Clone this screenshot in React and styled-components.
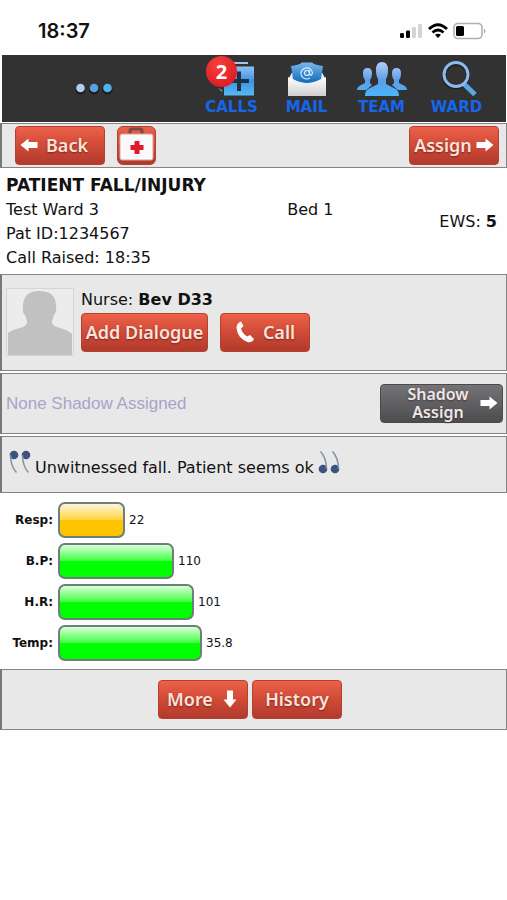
import React from "react";
import styled, { createGlobalStyle } from "styled-components";

const vitals = [
  { label: "Resp:", value: "22", width: 67, color: "#ffc400" },
  { label: "B.P:", value: "110", width: 116, color: "#00ff00" },
  { label: "H.R:", value: "101", width: 136, color: "#00ff00" },
  { label: "Temp:", value: "35.8", width: 144, color: "#00ff00" },
];

function App() {
  return (
    <Page>
      <GlobalStyle />
      <StatusBar>
        <Clock>18:37</Clock>
        <StatusIcons />
      </StatusBar>

      <Nav>
        <MenuLink href="#menu" aria-label="Menu">
          <DotsIcon />
        </MenuLink>
        <NavLink href="#calls">
          <CallsIcon />
          CALLS
          <Badge>2</Badge>
        </NavLink>
        <NavLink href="#mail">
          <MailIcon />
          MAIL
        </NavLink>
        <NavLink href="#team">
          <TeamIcon />
          TEAM
        </NavLink>
        <NavLink href="#ward">
          <WardIcon />
          WARD
        </NavLink>
      </Nav>

      <Toolbar>
        <BackButton>
          <Arrow turn={180} />
          Back
        </BackButton>
        <KitButton aria-label="First aid">
          <KitIcon />
        </KitButton>
        <Spacer />
        <Button $gap={4}>
          Assign
          <Arrow />
        </Button>
      </Toolbar>

      <Info>
        <Details>
          <Title>PATIENT FALL/INJURY</Title>
          <Line>Test Ward 3</Line>
          <Line>Pat ID:1234567</Line>
          <Line>Call Raised: 18:35</Line>
        </Details>
        <Bed>Bed 1</Bed>
        <Ews>
          EWS: <b>5</b>
        </Ews>
      </Info>

      <Panels>
        <NursePanel>
          <Avatar />
          <div>
            <Line>
              Nurse: <b>Bev D33</b>
            </Line>
            <Actions>
              <Button $width={127}>Add Dialogue</Button>
              <Button>
                <PhoneIcon />
                Call
              </Button>
            </Actions>
          </div>
        </NursePanel>

        <ShadowPanel>
          <Muted>None Shadow Assigned</Muted>
          <ShadowButton>
            <ShadowText>Shadow Assign</ShadowText>
            <Arrow />
          </ShadowButton>
        </ShadowPanel>

        <QuotePanel>
          <QuoteMark />
          <Quote>Unwitnessed fall. Patient seems ok</Quote>
          <QuoteMark close />
        </QuotePanel>
      </Panels>

      <Chart>
        {vitals.map((v) => (
          <Vital key={v.label}>
            <VitalLabel>{v.label}</VitalLabel>
            <Bar $color={v.color} style={{ width: v.width }} />
            <VitalValue>{v.value}</VitalValue>
          </Vital>
        ))}
      </Chart>

      <Footer>
        <Button>
          More
          <Arrow turn={90} />
        </Button>
        <Button>History</Button>
      </Footer>
    </Page>
  );
}

export default App;

function StatusIcons() {
  return (
    <svg width="88" height="18" viewBox="0 0 88 18">
      <rect x="1" y="11" width="4" height="5" rx="1.3" fill="#000" />
      <rect x="7" y="8.5" width="4" height="7.5" rx="1.3" fill="#000" />
      <rect x="13" y="5" width="4" height="11" rx="1.3" fill="#d4d4d4" />
      <rect x="19" y="2" width="4" height="14" rx="1.3" fill="#d4d4d4" />
      <g fill="none" stroke="#000" strokeWidth="2.8">
        <path d="M30 7 Q39 -1.5 48 7" />
        <path d="M33.5 10.5 Q39 5.5 44.5 10.5" />
      </g>
      <path d="M36 12.8 Q39 10.5 42 12.8 L39 16 Z" fill="#000" />
      <rect x="55" y="1.5" width="28" height="15" rx="4" fill="#fff" stroke="#b0b0b0" strokeWidth="1.6" />
      <rect x="57" y="4" width="8" height="10" rx="1.5" fill="#000" />
      <path d="M85 6.5 Q88 9 85 11.5 Z" fill="#a8a8a8" />
    </svg>
  );
}

function DotsIcon() {
  return (
    <svg width="38" height="14" viewBox="0 0 38 14">
      <g fill="#1b1b1b">
        <circle cx="5.5" cy="7.5" r="5" />
        <circle cx="19" cy="7.5" r="5" />
        <circle cx="32.5" cy="7.5" r="5" />
      </g>
      <circle cx="5.5" cy="6" r="4.3" fill="#b3cdf2" />
      <circle cx="19" cy="6" r="4.3" fill="#5b9fdf" />
      <circle cx="32.5" cy="6" r="4.3" fill="#52b3ea" />
    </svg>
  );
}

function CallsIcon() {
  return (
    <svg width="48" height="36" viewBox="0 0 48 36">
      <defs>
        <linearGradient id="calls" x1="0" y1="0" x2="0" y2="1">
          <stop offset="0" stopColor="#8fc1f2" />
          <stop offset="0.5" stopColor="#3d92e2" />
          <stop offset="1" stopColor="#58baf6" />
        </linearGradient>
      </defs>
      <path d="M22 2 H40" stroke="#a9c3e4" strokeWidth="2" />
      <rect x="16" y="5.5" width="30" height="29" fill="url(#calls)" />
      <path d="M31 10.5 V30 M21 20 H41" stroke="#23303f" strokeWidth="4" />
      <path d="M10 27 L14 29 V31 Z" fill="#6fa5dd" />
    </svg>
  );
}

function MailIcon() {
  return (
    <svg width="40" height="36" viewBox="0 0 40 36">
      <defs>
        <linearGradient id="env" x1="0" y1="0" x2="0" y2="1">
          <stop offset="0" stopColor="#ffffff" />
          <stop offset="1" stopColor="#cfcfd0" />
        </linearGradient>
        <linearGradient id="letter" x1="0" y1="0" x2="0" y2="1">
          <stop offset="0" stopColor="#78b7ee" />
          <stop offset="1" stopColor="#0f69b9" />
        </linearGradient>
      </defs>
      <path d="M2 17 L9 4 H31 L38 17 V34.5 H2 Z" fill="url(#env)" />
      <path d="M4 5 Q12 4 15 1.5 H25 Q28 4 36 5 L34 18 Q20 26 6 18 Z" fill="url(#letter)" />
      <g fill="none" stroke="#d9ecff" strokeWidth="1.2">
        <circle cx="20" cy="12" r="2.5" />
        <path d="M22.5 9 V13 Q24 16 25.5 12 A5.8 5.5 0 1 0 23 17" />
      </g>
      <path d="M1 16 Q11 22 20 22 Q29 22 39 16 V35 H1 Z" fill="url(#env)" />
    </svg>
  );
}

function TeamIcon() {
  return (
    <svg width="52" height="36" viewBox="0 0 52 36">
      <defs>
        <linearGradient id="team" x1="0" y1="0" x2="0" y2="36" gradientUnits="userSpaceOnUse">
          <stop offset="0" stopColor="#b8d0f5" />
          <stop offset="0.55" stopColor="#5b9de8" />
          <stop offset="1" stopColor="#4bb8fb" />
        </linearGradient>
      </defs>
      <g fill="url(#team)">
        <path d="M7 12 Q7 7 11.5 7 Q16 7 16 12 Q16 17 14 19 V22 L16 24 L10 29 H1 Q1 26 5 24 L9 22 V19 Q7 17 7 12 Z" />
        <path d="M45 12 Q45 7 40.5 7 Q36 7 36 12 Q36 17 38 19 V22 L36 24 L42 29 H51 Q51 26 47 24 L43 22 V19 Q45 17 45 12 Z" />
        <path d="M20 9 Q20 1 26 1 Q32 1 32 9 Q32 15 30 18 V23 L40 28 Q43 30 43 35 H9 Q9 30 12 28 L22 23 V18 Q20 15 20 9 Z" />
      </g>
    </svg>
  );
}

function WardIcon() {
  return (
    <svg width="40" height="36" viewBox="0 0 40 36">
      <circle cx="19" cy="14.5" r="12" fill="none" stroke="#1e1e1e" strokeWidth="4" />
      <path d="M27 23 L38 33.5" stroke="#5ba8e8" strokeWidth="5" />
      <circle cx="19" cy="13.5" r="12" fill="none" stroke="#8fbaee" strokeWidth="3" />
    </svg>
  );
}

function KitIcon() {
  return (
    <svg width="39" height="39" viewBox="0 0 39 39">
      <path d="M13 8 V5 Q13 3 15 3 H23 Q25 3 25 5 V8" fill="none" stroke="#7d4a44" strokeWidth="3" />
      <rect x="3" y="8" width="33" height="26" rx="2" fill="#fafafa" stroke="#d9a49c" />
      <path d="M20 15 V28 M13.5 21.5 H26.5" stroke="#e01b2c" strokeWidth="5" />
    </svg>
  );
}

function Arrow({ turn = 0 }) {
  return (
    <svg width="18" height="18" viewBox="0 0 18 18">
      <path
        d="M0.5 6 H9.5 V2.5 L17.5 9 L9.5 15.5 V12 H0.5 Z"
        fill="#fff"
        transform={`rotate(${turn} 9 9)`}
      />
    </svg>
  );
}

function PhoneIcon() {
  return (
    <svg width="20" height="24" viewBox="0 0 20 24">
      <path
        d="M6 1.5 L8.5 6 L6 8.5 Q7 13 12 16.5 L15 15 L19 19 Q17 23 12.5 22 Q2.5 18 1.5 8 Q1.5 3 6 1.5 Z"
        fill="#fff"
      />
    </svg>
  );
}

function Avatar() {
  return (
    <svg width="68" height="68" viewBox="0 0 68 68">
      <rect x="0.5" y="0.5" width="67" height="67" fill="#ececec" stroke="#d5d5d5" />
      <path
        d="M2 67 V45 Q6 42 14 40 Q22 38 21 33 L19 27 Q16 24 17 19 Q17 3 33 3 Q50 3 50 18 Q51 24 48 27 L46 33 Q45 38 54 40 Q62 42 66 46 V67 Z"
        fill="#c1c1c1"
      />
    </svg>
  );
}

function QuoteMark({ close }) {
  return (
    <svg width="24" height="24" viewBox="0 0 24 24">
      <g transform={close ? "rotate(180 12 12)" : undefined}>
        <g fill="#3d5280">
          <circle cx="6" cy="5" r="4.3" />
          <circle cx="18" cy="5" r="4.3" />
        </g>
        <path
          d="M2.5 5 Q2.5 16 8.5 22.5 M14.5 5 Q14.5 16 20.5 22.5"
          fill="none"
          stroke="#8591a8"
          strokeWidth="1.5"
        />
      </g>
    </svg>
  );
}

const GlobalStyle = createGlobalStyle`
  * {
    box-sizing: border-box;
  }
  body {
    margin: 0;
    background: #fefefe;
    color: #111;
    font-family: Verdana, "DejaVu Sans", sans-serif;
    font-size: 16px;
  }
  svg {
    display: block;
    flex: none;
  }
`;

const Page = styled.div`
  width: 100%;
`;

const StatusBar = styled.header`
  height: 55px;
  padding: 6px 20px 0 38px;
  display: flex;
  align-items: center;
  justify-content: space-between;
`;

const Clock = styled.span`
  font-family: Inter, sans-serif;
  font-size: 20px;
  font-weight: 600;
`;

const Nav = styled.nav`
  display: flex;
  height: 67px;
  margin: 0 1px 1px 2px;
  padding-right: 12px;
  background: #323232;
`;

const MenuLink = styled.a`
  flex: 1;
  display: flex;
  align-items: center;
  justify-content: center;
  padding-right: 8px;
`;

const NavLink = styled.a`
  position: relative;
  width: 75px;
  padding-top: 6px;
  display: flex;
  flex-direction: column;
  align-items: center;
  gap: 1px;
  font-size: 15px;
  font-weight: bold;
  line-height: 18px;
  color: #1765e8;
  text-decoration: none;
`;

const Badge = styled.span`
  position: absolute;
  top: 1px;
  left: 12px;
  width: 31px;
  height: 31px;
  border-radius: 50%;
  background: radial-gradient(circle at 40% 30%, #f5413f, #d90f18);
  color: #fff;
  font-family: "Open Sans", sans-serif;
  font-size: 20px;
  line-height: 31px;
  text-align: center;
`;

const Panel = styled.section`
  display: flex;
  background: #e8e8e8;
  border: 1px solid #858585;
  border-left: 2px solid #777;
`;

const Toolbar = styled(Panel)`
  height: 45px;
  padding: 2px 7px 0 13px;
  gap: 12px;
`;

const Spacer = styled.div`
  flex: 1;
`;

const Button = styled.button`
  display: flex;
  align-items: center;
  justify-content: center;
  gap: ${(p) => p.$gap || 8}px;
  width: ${(p) => p.$width || 90}px;
  height: 39px;
  padding: 0 0 2px;
  border: 1px solid #b5402f;
  border-radius: 4px;
  background: linear-gradient(#ec6148, #d04a38 50%, #b23a2c);
  color: #fbe3da;
  font-family: "Noto Sans", "Open Sans", sans-serif;
  font-size: 18px;
  font-weight: 600;
  line-height: 18px;
  white-space: nowrap;
  text-shadow: 0 1px 2px rgba(60, 0, 0, 0.5);
`;

const BackButton = styled(Button)`
  justify-content: flex-start;
  padding-left: 4px;
`;

const KitButton = styled(Button)`
  width: 39px;
  padding: 0;
  border-radius: 6px;
`;

const ShadowButton = styled(Button)`
  justify-content: flex-end;
  gap: 8px;
  width: 123px;
  padding-right: 4px;
  border-color: #4a4a4c;
  background: linear-gradient(#747476, #4d4d4f);
  color: #e9e9e9;
  font-size: 16px;
`;

const ShadowText = styled.span`
  width: 68px;
  white-space: normal;
  text-align: center;
`;

const Info = styled.section`
  display: flex;
  height: 106px;
  padding: 5px 10px 0 6px;
`;

const Details = styled.div`
  flex: 1;
`;

const Line = styled.div`
  line-height: 24px;
`;

const Title = styled.h1`
  margin: 0 0 1px;
  font-size: 17px;
  line-height: 24px;
`;

const Bed = styled.div`
  flex: none;
  width: 152px;
  padding-top: 25px;
  line-height: 24px;
`;

const Ews = styled.div`
  padding-top: 37px;
  line-height: 24px;
`;

const Panels = styled.div`
  display: flex;
  flex-direction: column;
  gap: 2px;
`;

const NursePanel = styled(Panel)`
  height: 97px;
  padding: 13px 4px;
  gap: 7px;
`;

const Actions = styled.div`
  display: flex;
  gap: 12px;
  margin-top: 1px;
`;

const ShadowPanel = styled(Panel)`
  height: 61px;
  padding: 0 3px 0 4px;
  align-items: center;
  justify-content: space-between;
`;

const Muted = styled.span`
  font-family: "Liberation Sans", Arial, sans-serif;
  font-size: 17px;
  color: #a9a3c9;
`;

const QuotePanel = styled(Panel)`
  height: 57px;
  padding: 0 6px 5px;
  align-items: center;
  gap: 3px;
`;

const Quote = styled.p`
  margin: 0;
  padding-top: 12px;
  line-height: 24px;
`;

const Chart = styled.section`
  display: flex;
  flex-direction: column;
  gap: 5px;
  padding: 9px 0 8px;
`;

const Vital = styled.div`
  display: flex;
  align-items: center;
  font-size: 12px;
  line-height: 18px;
`;

const VitalLabel = styled.b`
  width: 58px;
  padding-right: 5px;
  text-align: right;
`;

const Bar = styled.div`
  height: 36px;
  border: 2px solid #6c7f78;
  border-radius: 7px;
  background: linear-gradient(
      rgba(255, 255, 255, 0.85),
      rgba(255, 255, 255, 0.25) 50%,
      transparent 50%
    )
    ${(p) => p.$color};
`;

const VitalValue = styled.span`
  padding-left: 4px;
`;

const Footer = styled(Panel)`
  height: 61px;
  align-items: center;
  justify-content: center;
  gap: 4px;
  padding-right: 8px;
`;
